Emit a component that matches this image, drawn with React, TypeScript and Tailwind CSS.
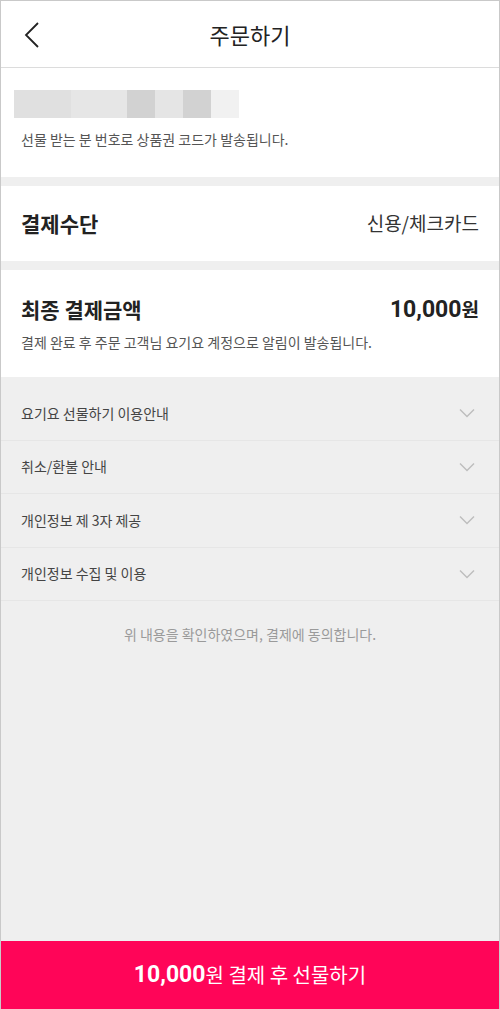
import React from 'react';

const items = ['요기요 선물하기 이용안내', '취소/환불 안내', '개인정보 제 3자 제공', '개인정보 수집 및 이용'];

const blurBlocks = [
  'w-[57px] bg-[#e0e0e0]',
  'w-[56px] bg-[#e6e6e6]',
  'w-[28px] bg-[#d2d2d2]',
  'w-[28px] bg-[#e5e5e5]',
  'w-[28px] bg-[#d2d2d2]',
  'w-[28px] bg-[#f1f1f1]',
];

function Chevron() {
  return (
    <svg width="16" height="10" viewBox="0 0 16 10" fill="none">
      <path d="M1 1.5L8 8.5L15 1.5" stroke="#bdbdbd" strokeWidth="1.4" />
    </svg>
  );
}

export default function App() {
  return (
    <div
      className="w-[500px] h-[1009px] flex flex-col bg-[#efefef] border-x border-t border-[#c9c9c9] overflow-hidden"
      style={{ fontFamily: '"Noto Sans CJK KR", Roboto, "Noto Sans", sans-serif' }}
    >
      {/* Header */}
      <div className="h-[67px] shrink-0 bg-white border-b border-[#dcdcdc] flex items-center relative">
        <button className="absolute left-[22px] top-[20px]">
          <svg width="18" height="28" viewBox="0 0 18 28" fill="none">
            <path d="M15 2L3 14L15 26" stroke="#222" strokeWidth="1.8" />
          </svg>
        </button>
        <h1 className="w-full text-center text-[22px] text-[#222] leading-none">주문하기</h1>
      </div>

      {/* Recipient */}
      <div className="bg-white pt-[22px] pb-[28px]">
        <div className="flex ml-[13px] h-[28px]">
          {blurBlocks.map((c, i) => (
            <div key={i} className={c} />
          ))}
        </div>
        <p className="mt-[11px] ml-[20px] text-[14px] text-[#555] leading-[20px]">선물 받는 분 번호로 상품권 코드가 발송됩니다.</p>
      </div>

      <div className="h-[9px] bg-[#efefef] shrink-0" />

      {/* Payment method */}
      <div className="bg-white h-[75px] flex items-center justify-between px-[20px]">
        <span className="text-[21px] font-bold text-[#222]">결제수단</span>
        <span className="text-[19px] text-[#333]">신용/체크카드</span>
      </div>

      <div className="h-[9px] bg-[#efefef] shrink-0" />

      {/* Total */}
      <div className="bg-white pt-[24px] pb-[25px] px-[20px]">
        <div className="flex items-center justify-between h-[32px]">
          <span className="text-[21px] font-bold text-[#222]">최종 결제금액</span>
          <span className="text-[#222] font-bold">
            <span className="text-[23px]" style={{ fontFamily: 'Roboto, sans-serif' }}>10,000</span>
            <span className="text-[19px]">원</span>
          </span>
        </div>
        <p className="mt-[6px] text-[14px] text-[#555] leading-[20px]">결제 완료 후 주문 고객님 요기요 계정으로 알림이 발송됩니다.</p>
      </div>

      {/* Accordions */}
      <div className="flex-1 flex flex-col pt-[10px]">
        {items.map((t) => (
          <div key={t} className="h-[53.5px] flex items-center justify-between pl-[20px] pr-[24px] border-b border-[#e6e6e6]">
            <span className="text-[14px] text-[#444]">{t}</span>
            <Chevron />
          </div>
        ))}
        <p className="mt-[23px] text-center text-[14px] text-[#9a9a9a]">위 내용을 확인하였으며, 결제에 동의합니다.</p>
      </div>

      {/* Bottom button */}
      <button className="h-[68px] shrink-0 bg-[#ff0558] text-white flex items-center justify-center">
        <span className="text-[23px] font-bold" style={{ fontFamily: 'Roboto, sans-serif' }}>10,000</span>
        <span className="text-[20px]">원 결제 후 선물하기</span>
      </button>
    </div>
  );
}
